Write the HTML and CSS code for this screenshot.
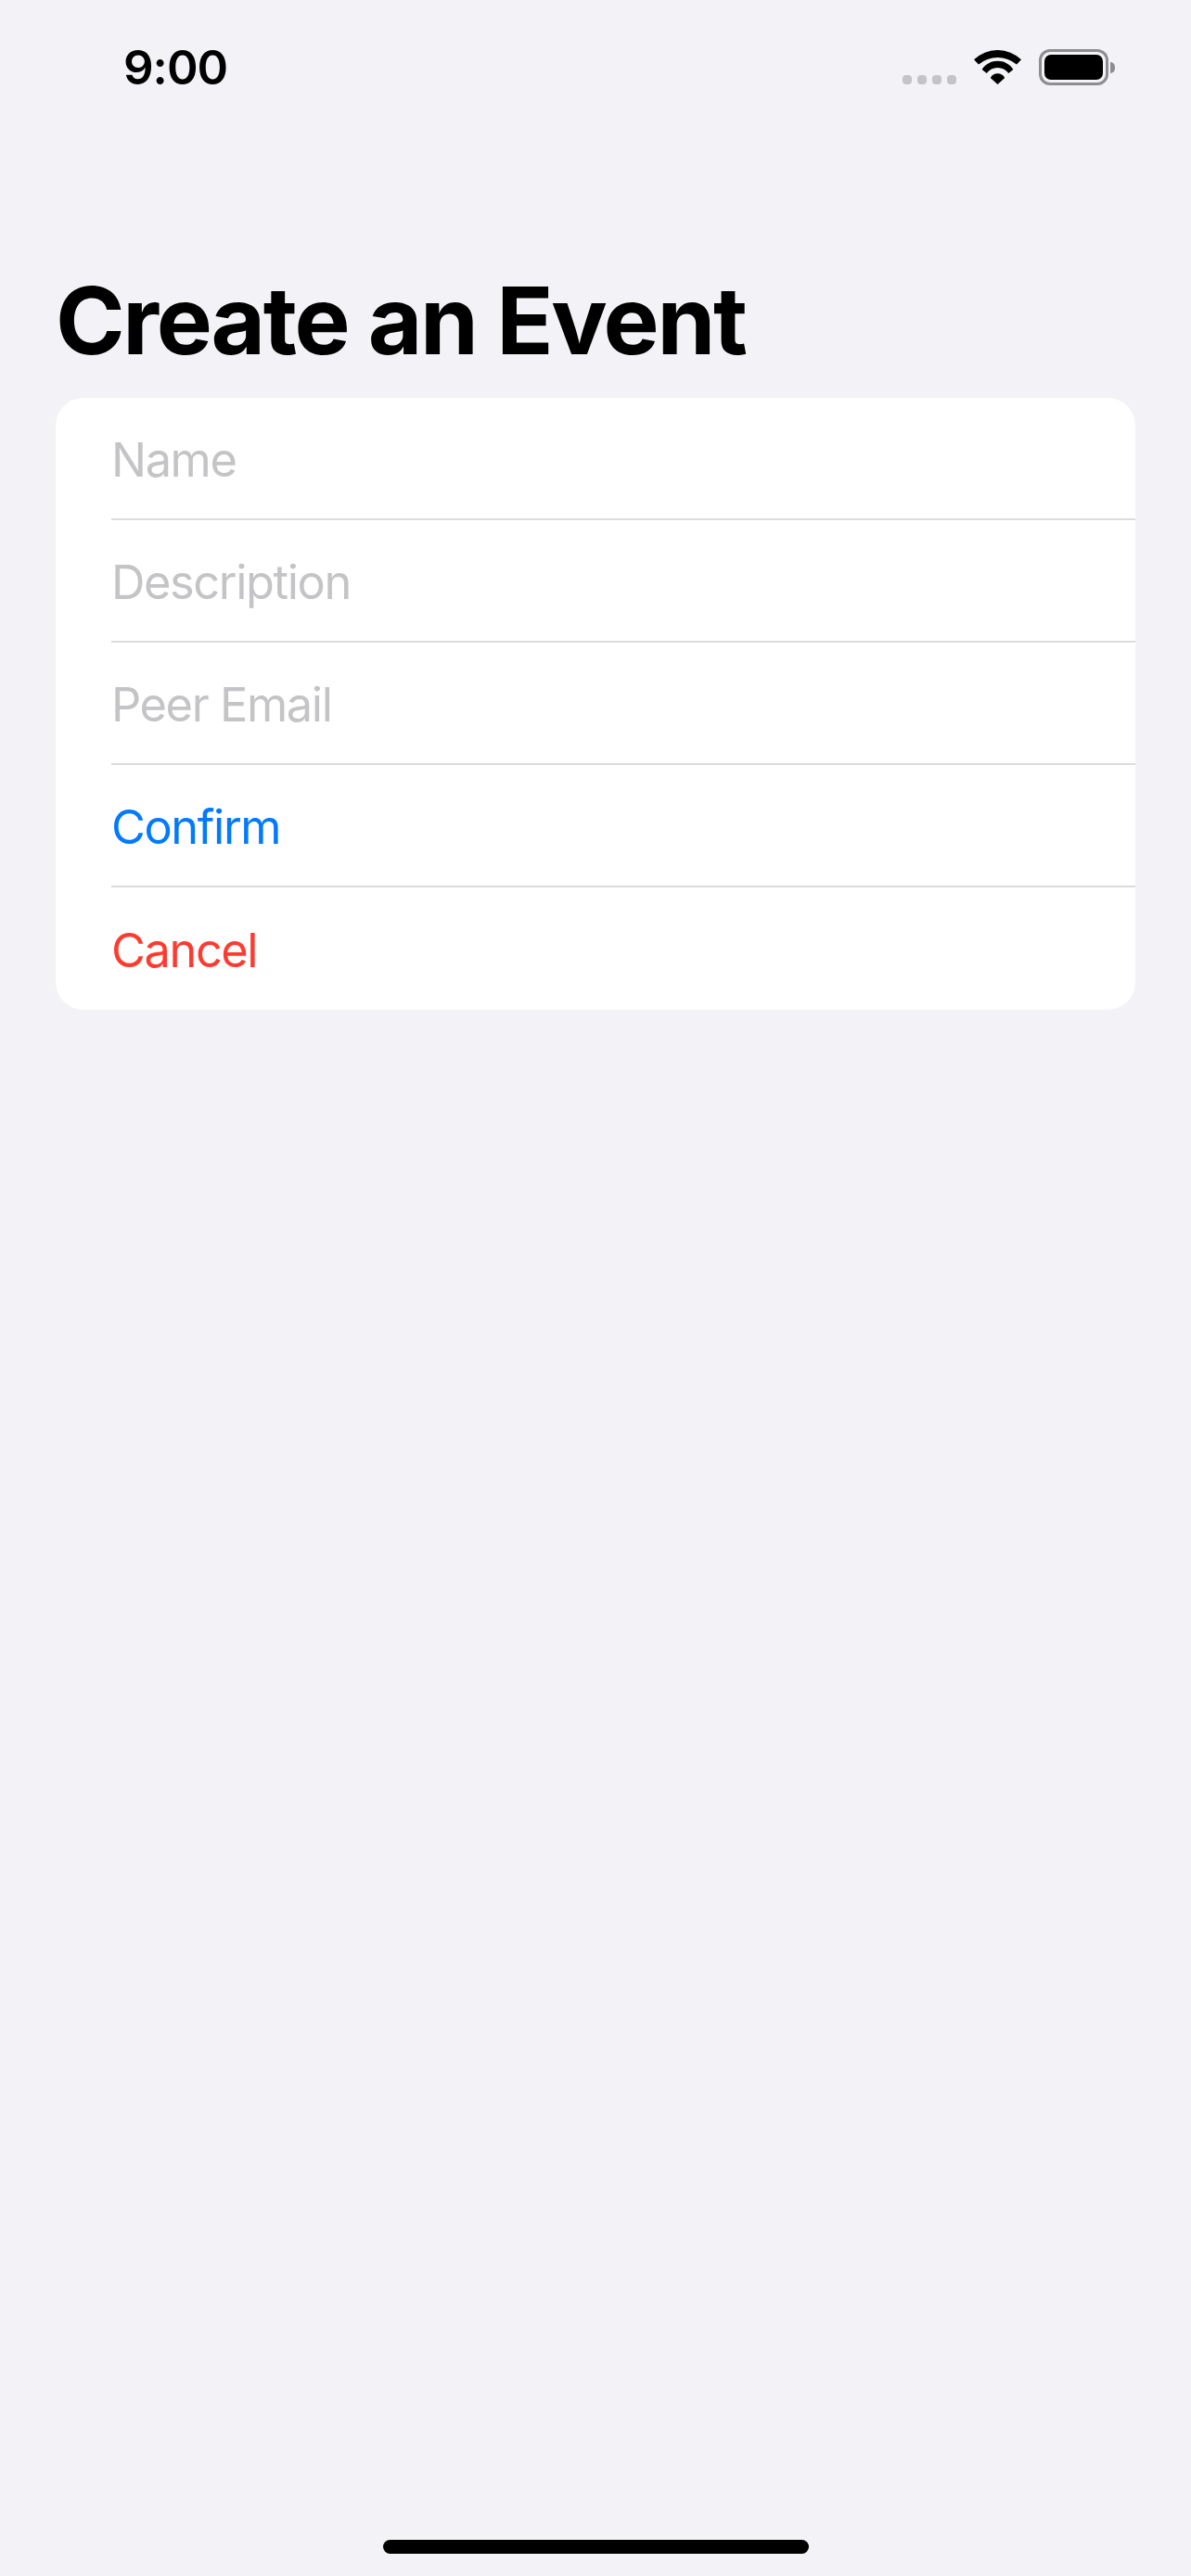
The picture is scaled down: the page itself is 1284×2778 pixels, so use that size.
FILE: index.html
```html
<!DOCTYPE html>
<html lang="en">
<head>
<meta charset="utf-8">
<title>Create an Event</title>
<link rel="stylesheet" href="styles.css">
</head>
<body>
<div class="screen">
  <header class="status">
    <span class="time">9:00</span>
    <div class="indicators">
      <div class="signal"><i></i><i></i><i></i><i></i></div>
      <svg class="wifi" viewBox="0 0 51 37" width="51" height="37" aria-hidden="true">
        <path d="M0 10.3A36.7 36.7 0 0 1 51 10.3L46 15.4A32 32 0 0 0 5 15.4Z"/>
        <path d="M8.7 21A19.8 19.8 0 0 1 42.3 21L37.3 25A14.6 14.6 0 0 0 13.7 25Z"/>
        <path d="M17.8 30A8.7 8.7 0 0 1 33.2 30L25.5 37Z"/>
      </svg>
      <div class="battery"><div class="battery-body"><div class="battery-fill"></div></div><div class="battery-cap"></div></div>
    </div>
  </header>
  <main class="content">
    <h1 class="title">Create an Event</h1>
    <section class="card">
      <div class="row"><span class="label placeholder">Name</span></div>
      <div class="row"><span class="label placeholder">Description</span></div>
      <div class="row"><span class="label placeholder">Peer Email</span></div>
      <div class="row"><span class="label confirm">Confirm</span></div>
      <div class="row"><span class="label cancel">Cancel</span></div>
    </section>
  </main>
  <div class="home-area"><div class="home-bar"></div></div>
</div>
</body>
</html>
```
FILE: styles.css
```css
* { box-sizing: border-box; }
html, body { margin: 0; padding: 0; }
body {
  background: #f2f2f7;
  font-family: "Inter", "Liberation Sans", sans-serif;
  color: #000;
}
.screen {
  width: 1284px;
  height: 2778px;
  display: flex;
  flex-direction: column;
  overflow: hidden;
}
.status {
  height: 120px;
  flex: none;
  display: flex;
  justify-content: space-between;
  align-items: flex-start;
  padding: 42px 82px 0 133px;
}
.time {
  font-size: 51px;
  font-weight: 600;
  line-height: 62px;
  letter-spacing: -1px;
}
.indicators {
  display: flex;
  align-items: flex-start;
  padding-top: 11px;
}
.signal {
  display: flex;
  gap: 6px;
  margin-top: 28px;
  margin-right: 19px;
}
.signal i {
  display: block;
  width: 10px;
  height: 10px;
  border-radius: 4px;
  background: #c4c4c8;
}
.wifi {
  display: block;
  fill: #000;
  margin-top: 1px;
  margin-right: 19px;
}
.battery {
  display: flex;
  align-items: center;
  gap: 2px;
}
.battery-body {
  width: 75px;
  height: 39px;
  border: 3px solid #8e8e92;
  border-radius: 12px;
  padding: 3px;
}
.battery-fill {
  width: 100%;
  height: 100%;
  background: #000;
  border-radius: 7px;
}
.battery-cap {
  width: 5px;
  height: 12px;
  background: #8e8e92;
  border-radius: 0 6px 6px 0;
}
.content {
  flex: 1;
  padding: 0 60px;
}
.title {
  margin: -120px 0 0;
  height: 429px;
  padding-top: 283px;
  font-size: 101px;
  font-weight: 700;
  line-height: 124px;
  letter-spacing: -2.35px;
}
.card {
  background: #fff;
  border-radius: 30px;
  overflow: hidden;
}
.row {
  height: 132px;
  margin-left: 60px;
  padding: 3px 0 0;
  display: flex;
  align-items: center;
  border-bottom: 2px solid #dcdcde;
}
.row:last-child { border-bottom: 0; }
.label {
  font-size: 50.5px;
  font-weight: 400;
  line-height: 62px;
  letter-spacing: -1.4px;
}
.placeholder { color: #c4c4c6; }
.confirm { color: #007aff; }
.cancel { color: #ff3b30; }
.home-area {
  flex: none;
  height: 39px;
  display: flex;
  justify-content: center;
}
.home-bar {
  width: 459px;
  height: 15px;
  border-radius: 8px;
  background: #000;
}
```
